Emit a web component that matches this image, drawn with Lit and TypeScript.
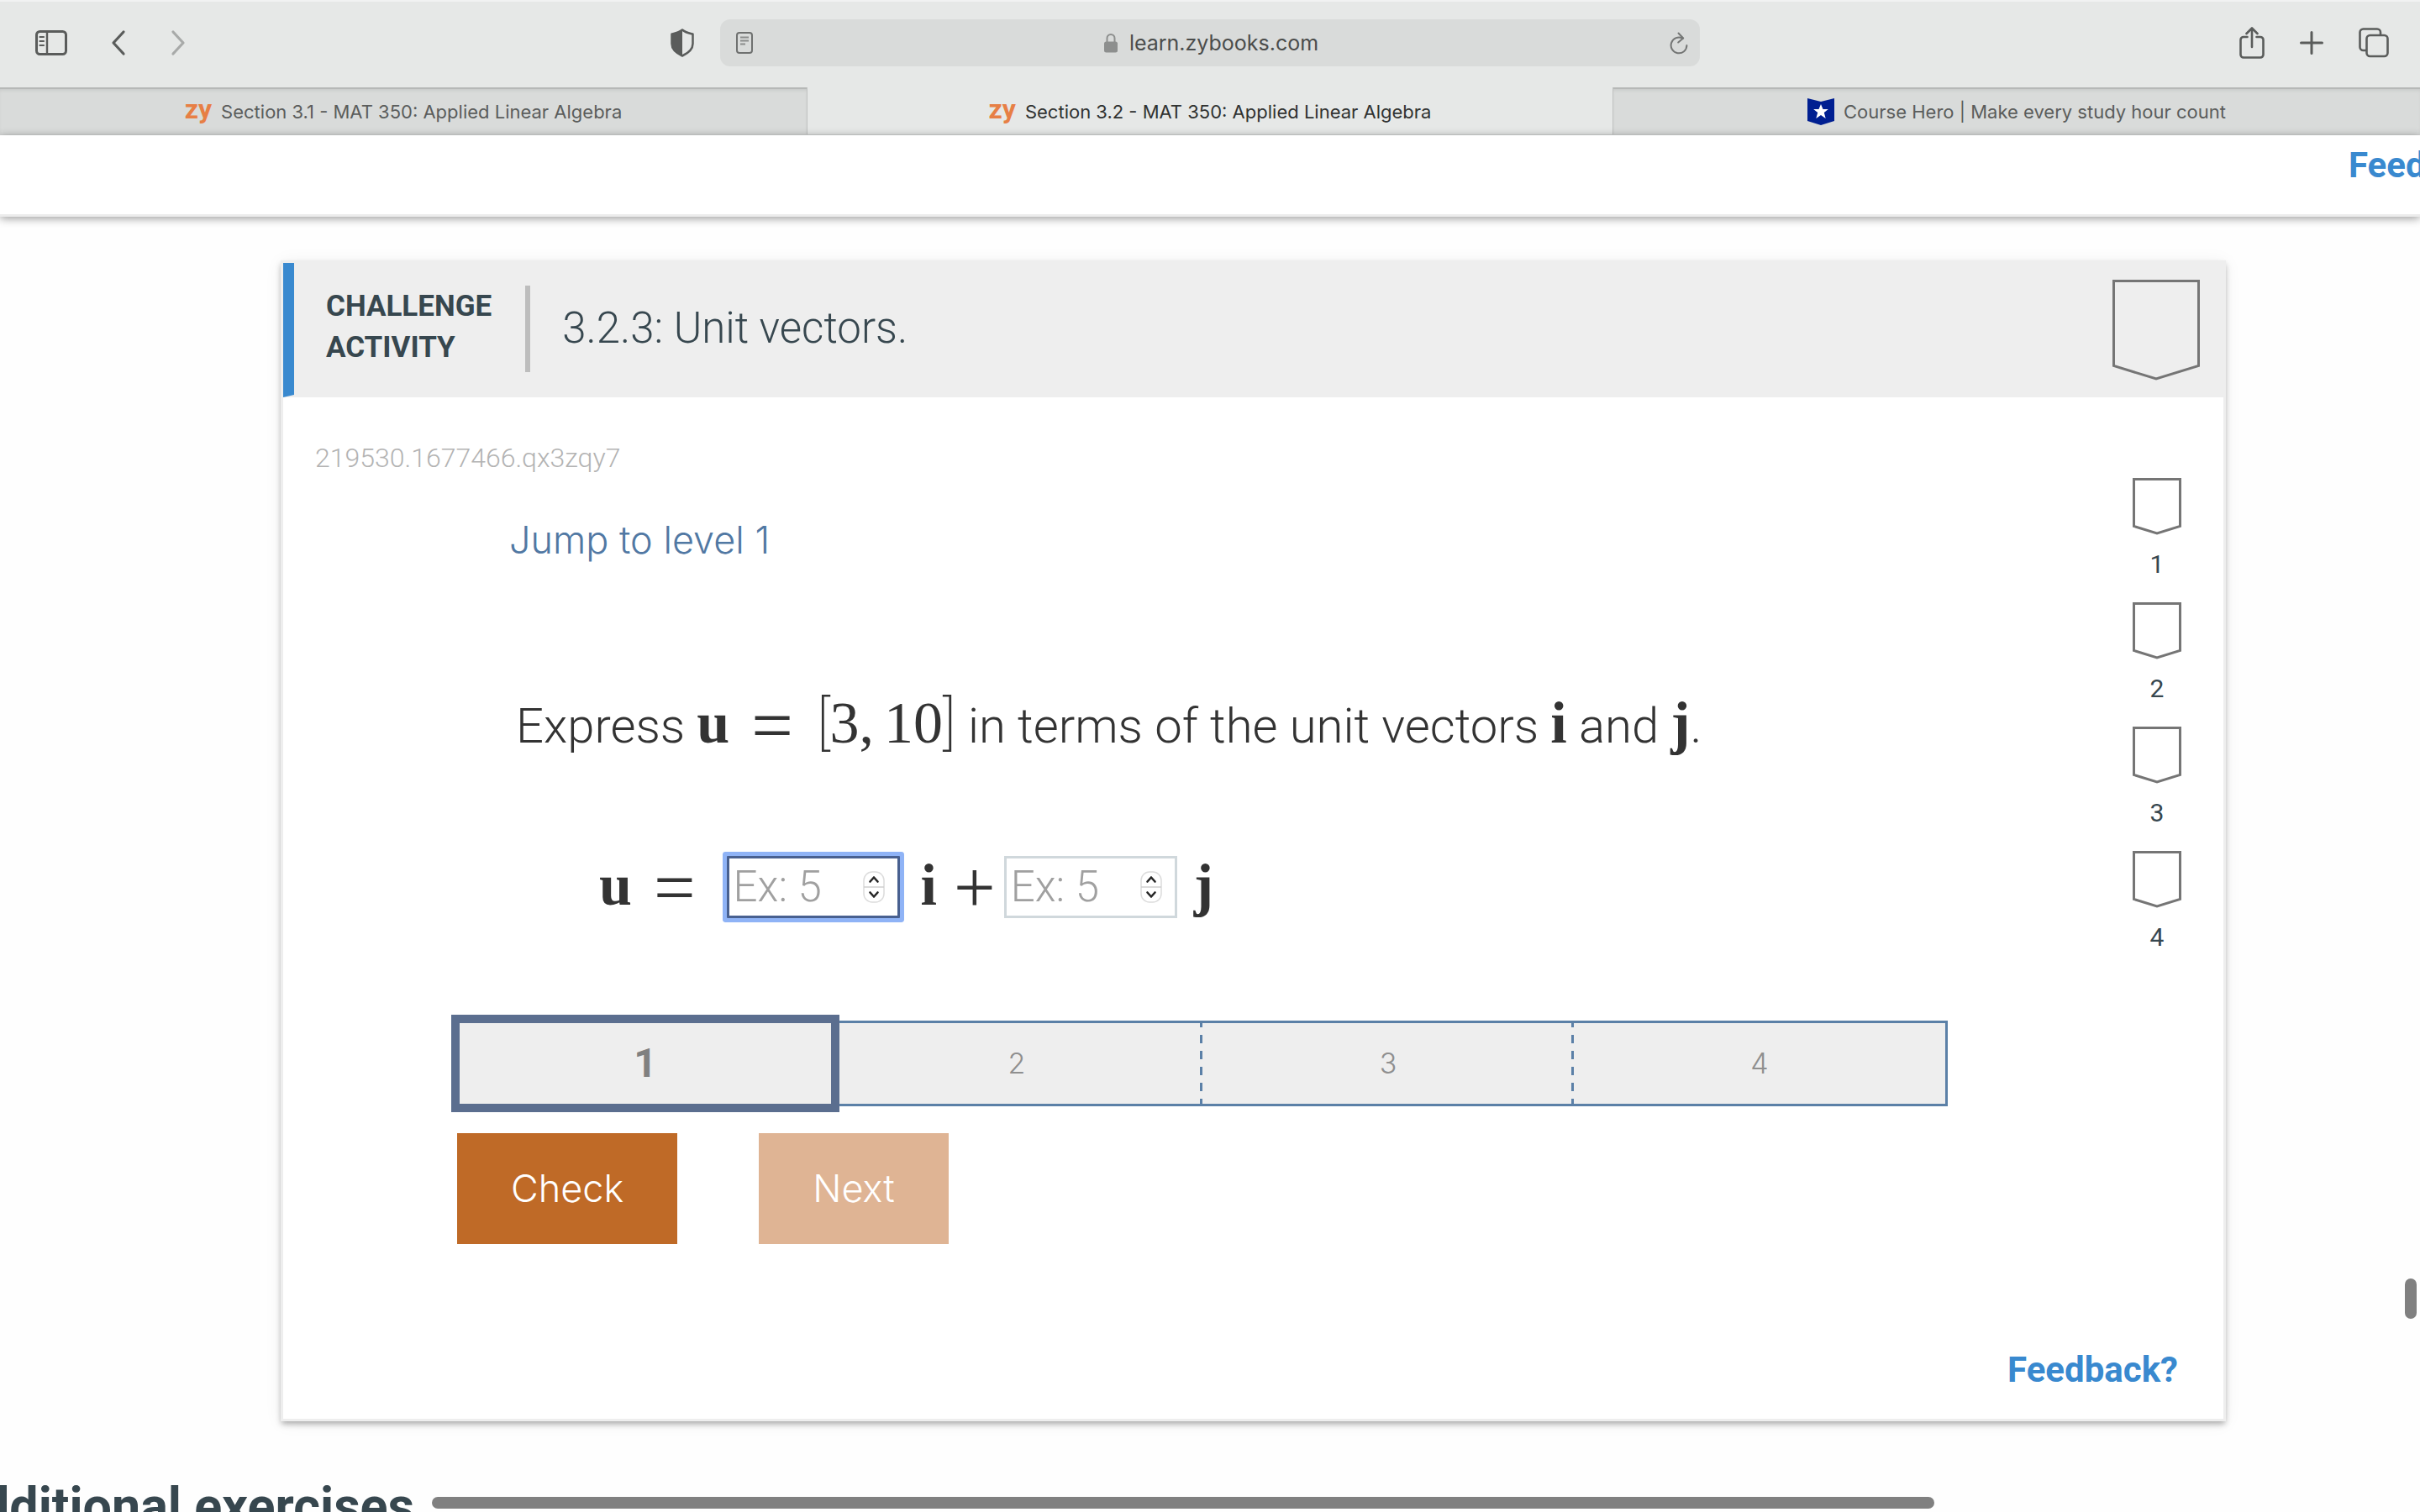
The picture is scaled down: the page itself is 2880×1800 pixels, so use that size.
import { LitElement, html, css, svg } from "lit";
import { customElement, property, state } from "lit/decorators.js";
import { classMap } from "lit/directives/class-map.js";

const sidebarIcon = svg`<svg width="40" height="32" viewBox="0 0 40 32" fill="none" stroke="#5a5c5b" stroke-width="3"><rect x="2.5" y="2.5" width="35" height="27" rx="4"/><path d="M15 2v28" stroke-width="2.4"/><path d="M6.500 9h4.500M6.500 14h4.500M6.500 19h4.500" stroke-width="2.2" stroke-linecap="round"/></svg>`;
const chevronLeft = svg`<svg width="20" height="32" viewBox="0 0 20 32" fill="none" stroke="#5a5c5b" stroke-width="3.200" stroke-linecap="round" stroke-linejoin="round"><path d="M16 3 4 16l12 13"/></svg>`;
const chevronRight = svg`<svg width="20" height="32" viewBox="0 0 20 32" fill="none" stroke="#a8aaa9" stroke-width="3.200" stroke-linecap="round" stroke-linejoin="round"><path d="m4 3 12 13L4 29"/></svg>`;
const shieldIcon = svg`<svg width="28" height="34" viewBox="0 0 28 34"><path d="M14 1.500C10 5 6 5.500 1.500 6.500V18c0 7 6 11.500 12.500 14.500C20.500 29.500 26.500 25 26.500 18V6.500C22 5.500 18 5 14 1.500Z" fill="none" stroke="#5a5c5b" stroke-width="2.500" stroke-linejoin="round"/><path d="M14 1.500C10 5 6 5.500 1.500 6.500V18c0 7 6 11.500 12.500 14.500Z" fill="#5a5c5b"/></svg>`;
const readerIcon = svg`<svg width="20" height="26" viewBox="0 0 20 26" fill="none" stroke="#6f7170" stroke-width="2"><rect x="1" y="1" width="18" height="24" rx="3"/><path d="M5 6.500h10M5 10.500h10M5 14.500h6" stroke="#8b8d8c"/></svg>`;
const lockIcon = svg`<svg width="16" height="24" viewBox="0 0 16 24"><path d="M3.500 11V6.500a4.500 4.500 0 0 1 9 0V11" fill="none" stroke="#8d8f8e" stroke-width="2"/><rect x="0" y="10.500" width="16" height="13" rx="2.500" fill="#8d8f8e"/></svg>`;
const reloadIcon = svg`<svg width="22" height="27" viewBox="0 0 22 27" fill="none" stroke="#747675" stroke-width="2" stroke-linecap="round" stroke-linejoin="round"><path d="M15.500 7.700A9.400 9.400 0 1 0 20.400 16"/><path d="m10.500 1.500 5.700 6-6 5"/></svg>`;
const shareIcon = svg`<svg width="30" height="38" viewBox="0 0 30 38" fill="none" stroke="#5a5c5b" stroke-width="2.600" stroke-linecap="round" stroke-linejoin="round"><path d="M9.500 12H5a3.500 3.500 0 0 0-3.500 3.500V33A3.500 3.500 0 0 0 5 36.500h20a3.500 3.500 0 0 0 3.500-3.500V15.500A3.500 3.500 0 0 0 25 12h-4.500"/><path d="M15 24V2M8.500 8 15 1.500 21.500 8"/></svg>`;
const plusIcon = svg`<svg width="28" height="28" viewBox="0 0 28 28" stroke="#5a5c5b" stroke-width="3" stroke-linecap="round"><path d="M14 1.500v25M1.500 14h25"/></svg>`;
const tabsIcon = svg`<svg width="36" height="36" viewBox="0 0 36 36" fill="none" stroke="#5a5c5b" stroke-width="2.600" stroke-linejoin="round"><path d="M9.500 27H5.500A4 4 0 0 1 1.500 23V5.500a4 4 0 0 1 4-4h16.500a4 4 0 0 1 4 4V9"/><rect x="9.500" y="9" width="25" height="25" rx="4"/></svg>`;
const heroIcon = svg`<svg width="32" height="32" viewBox="0 0 32 32"><path d="M0 0 16 4 32 0V27L16 32 0 27Z" fill="#001f91"/><path d="m16 7 2.500 6h6.300l-5 4 1.900 7-5.700-4-5.700 4 1.900-7-5-4h6.300Z" fill="#fff"/></svg>`;
const stepperIcon = svg`<svg width="26" height="38" viewBox="0 0 26 38" fill="none"><rect x="1" y="1" width="24" height="36" rx="10" fill="#fff" stroke="#dcdcdc" stroke-width="1.500"/><path d="M1 19h24" stroke="#cfcfcf" stroke-width="1.500"/><path d="m8.500 12.500 4.500-5 4.500 5M8.500 25.500l4.500 5 4.500-5" stroke="#262626" stroke-width="2.600" stroke-linecap="round" stroke-linejoin="round"/></svg>`;
const bigBadge = svg`<svg width="104" height="120" viewBox="0 0 104 120" fill="none" stroke="#757575" stroke-width="3"><path d="M1.500 1.500h101v101L52 118 1.500 102.500Z"/></svg>`;
const smallBadge = svg`<svg width="58" height="68" viewBox="0 0 58 68" fill="none" stroke="#757575" stroke-width="3"><path d="M1.500 1.500h55v56L29 66 1.500 57.500Z"/></svg>`;

@customElement("browser-chrome")
class BrowserChrome extends LitElement {
  static styles = css`
    :host { display: block; font-family: Inter, "Liberation Sans", sans-serif; }
    svg { display: block; }
    button { border: 0; padding: 0; background: none; }
    .toolbar { display: grid; grid-template-columns: 1fr minmax(0, 1166px) 1fr; align-items: center; height: 104px; box-sizing: border-box; background: #e6e8e7; border-top: 2px solid #f1f2f2; padding-bottom: 4px; }
    .side { display: flex; align-items: center; padding-left: 41px; }
    .side .back { margin-left: 50px; }
    .side .forward { margin-left: 51px; }
    .side .shield { margin-left: auto; margin-right: 31px; }
    .address { display: flex; align-items: center; height: 56px; border-radius: 12px; background: #d9dbda; padding: 0 14px 0 19px; }
    .site { flex: 1; display: flex; justify-content: center; align-items: center; gap: 14px; font-size: 25px; line-height: 32px; color: #4b4d4c; }
    .actions { display: flex; align-items: center; justify-content: flex-end; gap: 42px; padding-right: 37px; }
    .tabs { display: grid; grid-template-columns: repeat(3, 1fr); height: 57px; }
    .tab { display: flex; align-items: center; justify-content: center; gap: 11px; box-sizing: border-box; padding-top: 2px; font-size: 22px; line-height: 28px; color: #5b5d5c; background: #d9dbda; text-decoration: none; border-bottom: 1px solid #d4d6d5; box-shadow: inset 0 2px 0 #b6b8b7, inset 0 5px 4px -2px #c3c5c4; }
    .tab.current { color: #303231; background: #e6e8e7; box-shadow: inset 1px 0 0 #c0c2c1, inset -1px 0 0 #c0c2c1; }
    .zy { font-family: Roboto, sans-serif; font-weight: 700; font-size: 32px; line-height: 28px; color: #e77f45; padding-bottom: 7px; }
  `;

  render() {
    return html`
      <div class="toolbar">
        <div class="side">
          <button aria-label="Sidebar">${sidebarIcon}</button>
          <button class="back" aria-label="Back">${chevronLeft}</button>
          <button class="forward" aria-label="Forward">${chevronRight}</button>
          <button class="shield" aria-label="Privacy report">${shieldIcon}</button>
        </div>
        <div class="address">
          <button aria-label="Reader">${readerIcon}</button>
          <span class="site">${lockIcon}<span>learn.zybooks.com</span></span>
          <button aria-label="Reload">${reloadIcon}</button>
        </div>
        <div class="actions">
          <button aria-label="Share">${shareIcon}</button>
          <button aria-label="New tab">${plusIcon}</button>
          <button aria-label="Tab overview">${tabsIcon}</button>
        </div>
      </div>
      <nav class="tabs">
        <a class="tab" href="#s31"><span class="zy">zy</span>Section 3.1 - MAT 350: Applied Linear Algebra</a>
        <a class="tab current" href="#s32"><span class="zy">zy</span>Section 3.2 - MAT 350: Applied Linear Algebra</a>
        <a class="tab" href="#hero">${heroIcon}Course Hero | Make every study hour count</a>
      </nav>
    `;
  }
}

@customElement("number-field")
class NumberField extends LitElement {
  @property() label = "";
  @property({ type: Boolean }) active = false;

  static styles = css`
    :host { display: block; }
    .field { display: flex; align-items: center; box-sizing: border-box; width: 206px; height: 74px; padding: 0 15px 0 5px; border: 3px solid #d0d8dc; background: #fff; }
    .field.active { border-color: #486090; box-shadow: 0 0 0 5px #8fb3f6; border-radius: 1px; }
    input { flex: 1; min-width: 0; border: 0; outline: 0; padding: 0; background: none; font: 300 51px/60px Roboto, sans-serif; color: #333; appearance: textfield; }
    input::placeholder { color: #a0a0a0; opacity: 1; }
    input::-webkit-inner-spin-button { appearance: none; margin: 0; }
    svg { display: block; }
  `;

  render() {
    return html`<label class=${classMap({ field: true, active: this.active })}>
      <input type="number" placeholder="Ex: 5" aria-label=${this.label} />${stepperIcon}
    </label>`;
  }
}

@customElement("challenge-card")
class ChallengeCard extends LitElement {
  @state() private level = 1;
  private levels = [1, 2, 3, 4];

  static styles = css`
    :host { display: block; font-family: Roboto, "Liberation Sans", sans-serif; border: 3px solid #eee; background: #fff; box-shadow: 0 4px 7px -1px rgba(0, 0, 0, 0.32), 0 2px 20px rgba(0, 0, 0, 0.06); }
    svg { display: block; }
    h2, p { margin: 0; font-weight: 300; }
    .head { display: flex; align-items: flex-start; background: #eee; border-left: 13px solid #3989cf; border-bottom: 3px solid #eee; height: 157px; padding: 0 28px 0 38px; color: #37474f; }
    .kind { margin-top: 27px; height: 103px; padding-right: 40px; border-right: 6px solid #bdbdbd; font-size: 35px; line-height: 49px; font-weight: 700; }
    .title { flex: 1; margin-top: 27px; padding-left: 38px; font-size: 51px; line-height: 102px; }
    .award { margin-top: 20px; }
    .ident { padding: 52px 38px 1px; font-size: 32px; line-height: 40px; color: #b3b3b3; }
    .body { display: flex; padding: 0 50px 0 207px; gap: 220px; }
    .work { flex: 1; padding-top: 46px; }
    .light { font-family: Inter, "Liberation Sans", sans-serif; font-weight: 300; }
    .jump { display: block; margin-left: 62px; font-size: 45px; line-height: 62px; color: #5178a3; text-decoration: none; }
    .prompt { margin: 150px 0 0 70px; font-size: 58px; line-height: 80px; color: #333; }
    .math { font-family: "Liberation Serif", serif; font-weight: 400; font-size: 70px; line-height: 0; }
    .math b { font-weight: 700; }
    .bracket { font-family: Roboto, sans-serif; font-weight: 200; }
    .second { margin-left: 12px; }
    .op { font-size: 88px; line-height: 0; vertical-align: -9px; margin: 0 28px 0 26px; }
    .answer { display: flex; align-items: center; margin: 115px 0 0 169px; height: 74px; color: #333; }
    .answer .math { line-height: 66px; margin-bottom: 4px; }
    .answer .op { line-height: 0; }
    .lead { margin-right: 9px; }
    .mid { margin-left: 25px; }
    .mid .op { margin: 0 10px 0 20px; }
    .end { margin-left: 20px; }
    .steps { display: grid; grid-template-columns: repeat(4, 1fr); height: 96px; margin-top: 122px; border: 3px solid #5b80a7; background: #eee; }
    .step { display: flex; align-items: center; justify-content: center; font-size: 34px; line-height: 40px; color: #8f8f8f; background: repeating-linear-gradient(#5b80a7 0 5px, transparent 5px 14px, #5b80a7 14px 19px) right / 3px 100% no-repeat; }
    .step:last-child { background: none; }
    .step.on { z-index: 1; box-shadow: 0 0 0 10px #5b6e8f; background: #eee; font-size: 48px; font-weight: 700; color: #808080; }
    .buttons { display: flex; gap: 97px; margin-top: 32px; }
    .button { border: 0; padding: 0 64px; height: 132px; font-size: 45px; line-height: 60px; color: #fff; background: #bf6a27; }
    .button:disabled { background: #dfb494; }
    .badges { display: flex; flex-direction: column; gap: 24px; margin: 0; padding: 3px 0 0; list-style: none; }
    .badges li { height: 124px; text-align: center; font-size: 30px; line-height: 36px; color: #37474f; }
    .badges svg { margin-bottom: 17px; }
    .foot { display: flex; justify-content: flex-end; padding: 125px 54px 33px; }
    .feedback { font-size: 42px; line-height: 50px; font-weight: 700; color: #3989cf; text-decoration: none; }
  `;

  render() {
    return html`
      <header class="head">
        <div class="kind">CHALLENGE<br />ACTIVITY</div>
        <h2 class="title">3.2.3: Unit vectors.</h2>
        <div class="award">${bigBadge}</div>
      </header>
      <p class="ident">219530.1677466.qx3zqy7</p>
      <div class="body">
        <div class="work">
          <a class="jump light" href="#level-1">Jump to level 1</a>
          <p class="prompt">
            Express <span class="math"><b>u</b><span class="op">=</span><span class="bracket">[</span>3,<span class="second">10</span><span class="bracket">]</span></span>
            in terms of the unit vectors <span class="math"><b>i</b></span> and <span class="math"><b>j</b></span>.
          </p>
          <div class="answer">
            <span class="math lead"><b>u</b><span class="op">=</span></span>
            <number-field label="i component" active></number-field>
            <span class="math mid"><b>i</b><span class="op">+</span></span>
            <number-field label="j component"></number-field>
            <span class="math end"><b>j</b></span>
          </div>
          <div class="steps">
            ${this.levels.map((n) => html`<div class=${classMap({ step: true, on: n === this.level, light: n !== this.level })}>${n}</div>`)}
          </div>
          <div class="buttons">
            <button class="button light">Check</button>
            <button class="button light" disabled>Next</button>
          </div>
        </div>
        <ol class="badges">
          ${this.levels.map((n) => html`<li>${smallBadge}${n}</li>`)}
        </ol>
      </div>
      <footer class="foot"><a class="feedback" href="#feedback">Feedback?</a></footer>
    `;
  }
}

@customElement("app-root")
class AppRoot extends LitElement {
  static styles = css`
    :host { display: flex; flex-direction: column; position: relative; height: 100vh; overflow: hidden; background: #fefefe; font-family: Roboto, "Liberation Sans", sans-serif; }
    .bar { flex: none; height: 94px; overflow: hidden; box-sizing: content-box; background: #fff; border-bottom: 3px solid #ececec; box-shadow: 0 2px 10px rgba(0, 0, 0, 0.4); display: flex; justify-content: flex-end; }
    .feedback { width: 85px; padding-top: 11px; white-space: nowrap; font-size: 42px; line-height: 50px; font-weight: 700; color: #3989cf; text-decoration: none; }
    challenge-card { flex: none; margin: 52px 231px 0 334px; }
    .more { flex: none; margin: 65px 0 0 -64px; font-size: 61px; line-height: 72px; font-weight: 700; color: #37474f; white-space: nowrap; }
    .thumb { position: absolute; border-radius: 7px; background: #808080; }
    .thumb.vertical { right: 4px; top: 1522px; width: 14px; height: 48px; }
    .thumb.horizontal { left: 514px; right: 578px; bottom: 4px; height: 14px; }
  `;

  render() {
    return html`
      <browser-chrome></browser-chrome>
      <div class="bar"><a class="feedback" href="#feedback">Feedback?</a></div>
      <challenge-card></challenge-card>
      <h1 class="more">Additional exercises</h1>
      <div class="thumb vertical"></div>
      <div class="thumb horizontal"></div>
    `;
  }
}
